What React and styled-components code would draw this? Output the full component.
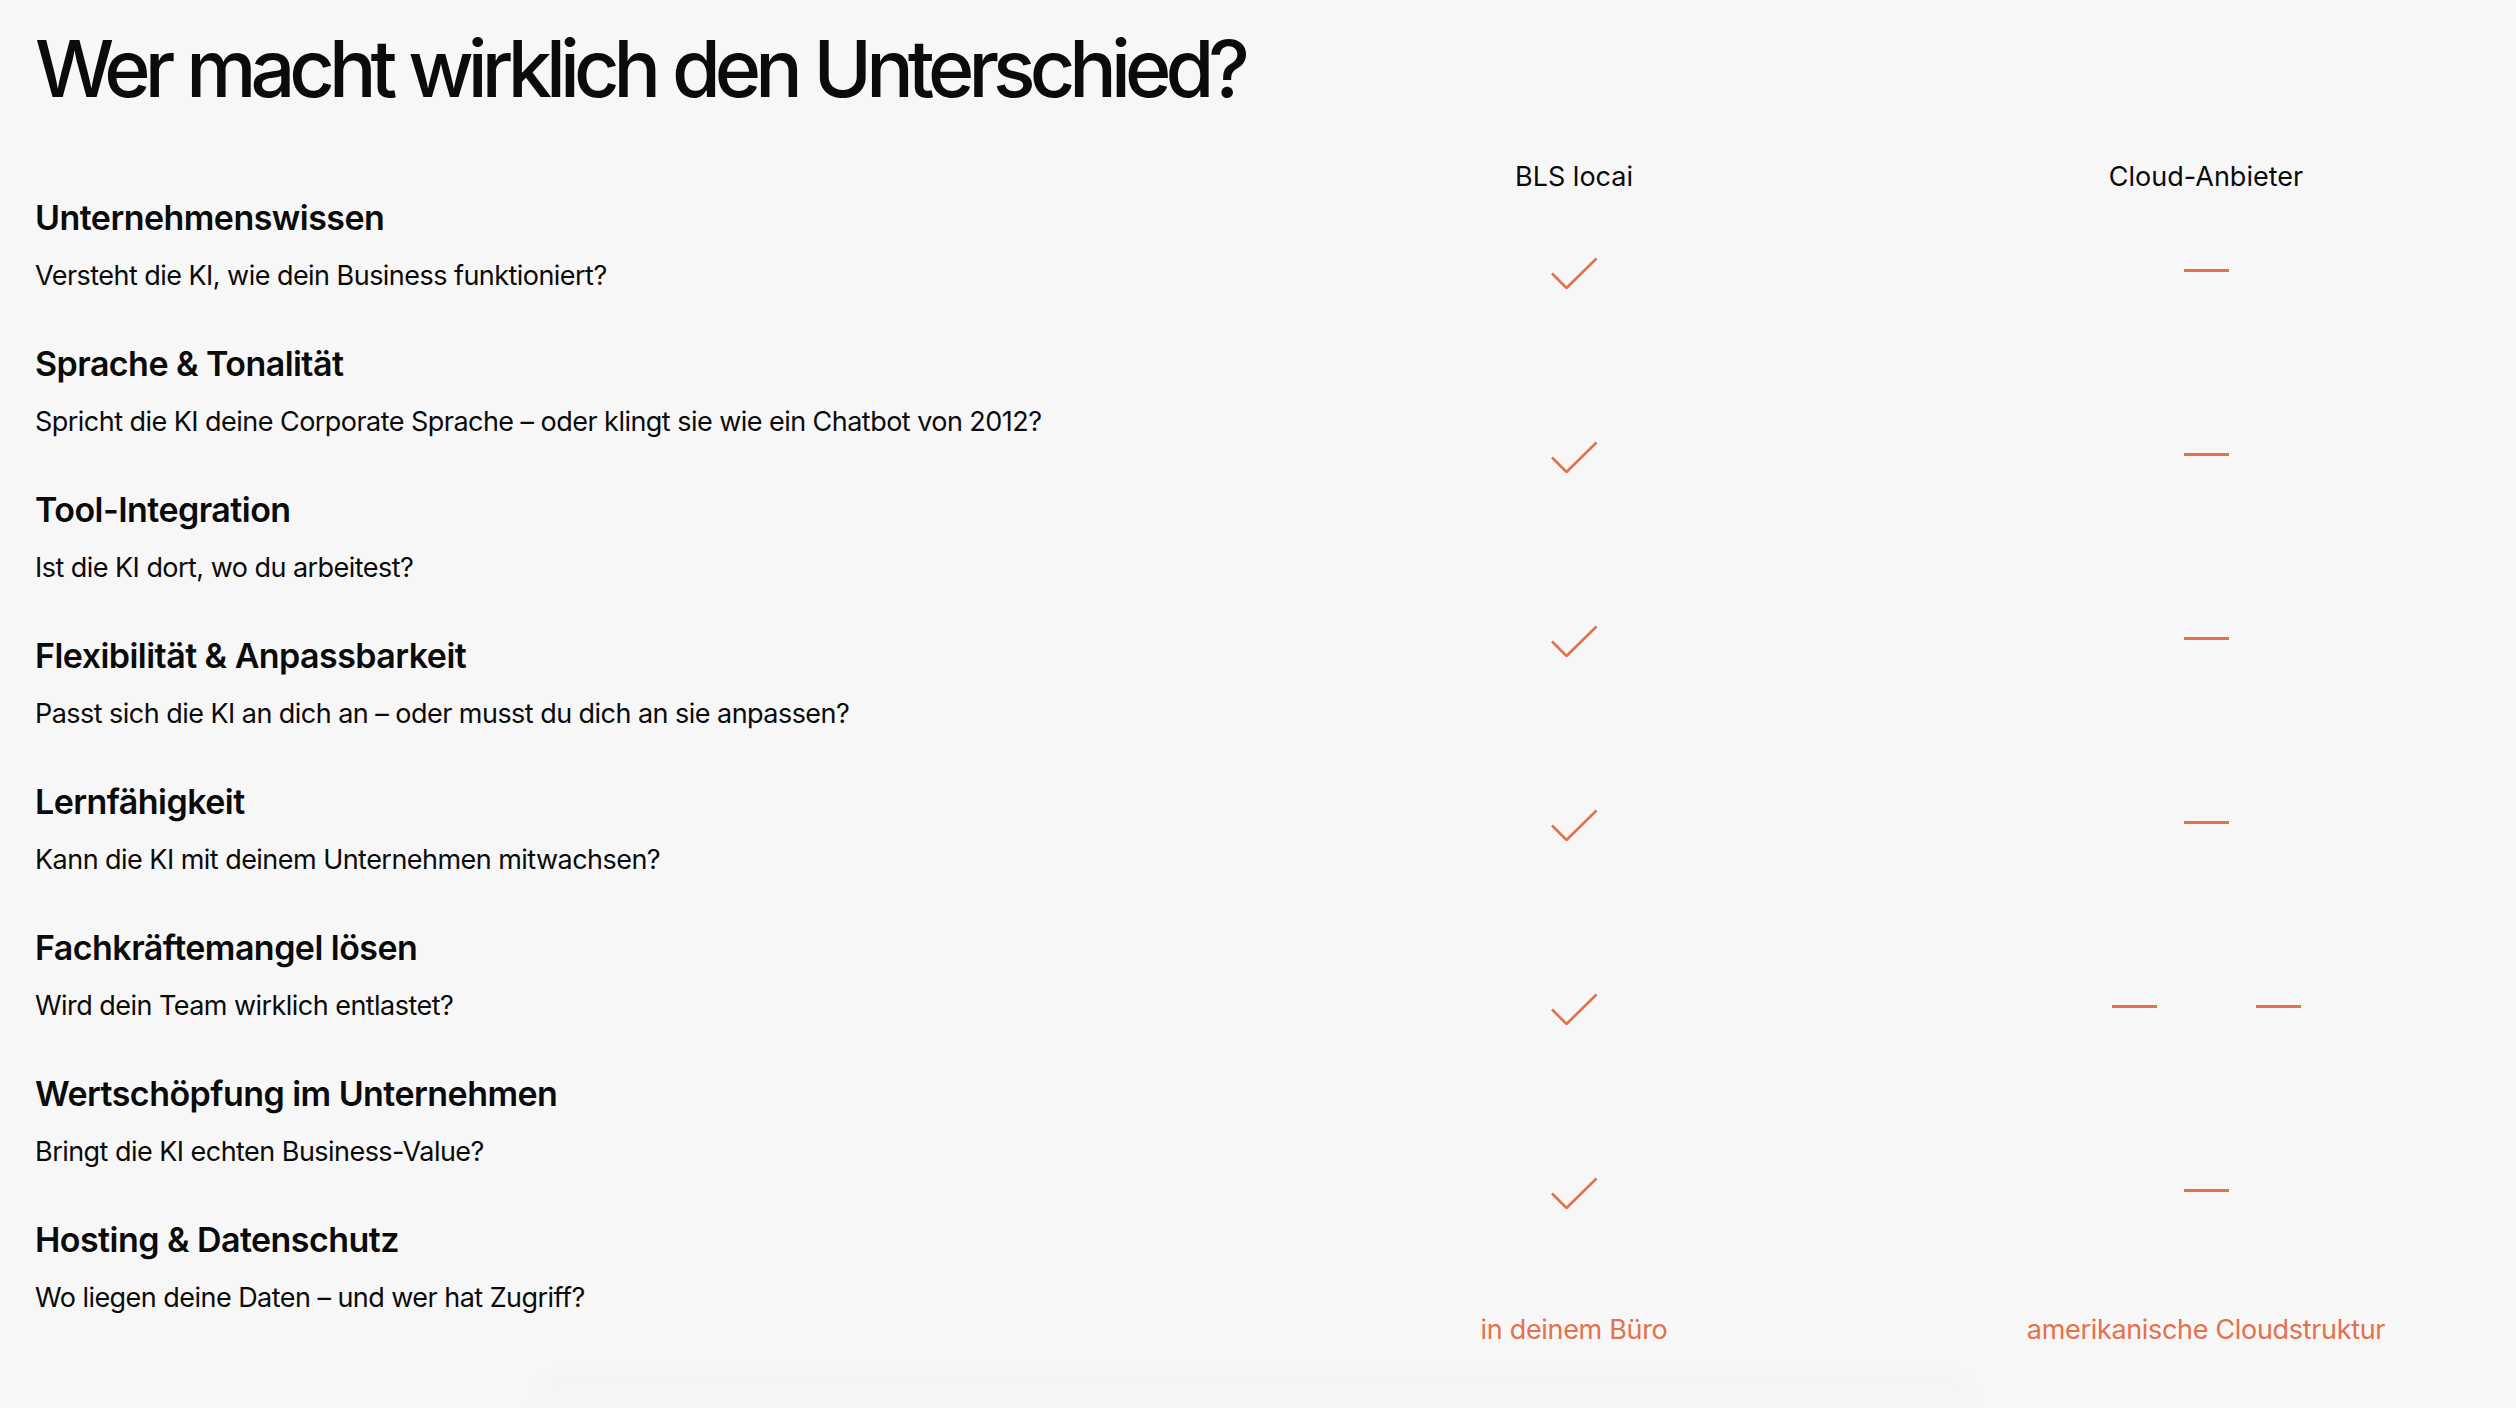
import React from "react";
import styled, { createGlobalStyle } from "styled-components";

const GlobalStyle = createGlobalStyle`
  html, body {
    margin: 0;
    padding: 0;
    background: #f7f7f7;
  }
  body {
    font-family: Inter, "Noto Sans", sans-serif;
    color: #0b0b0b;
    -webkit-font-smoothing: antialiased;
  }
`;

const ACCENT = "#e5704a";

const criteria = [
  { title: "Unternehmenswissen", question: "Versteht die KI, wie dein Business funktioniert?" },
  { title: "Sprache & Tonalität", question: "Spricht die KI deine Corporate Sprache – oder klingt sie wie ein Chatbot von 2012?" },
  { title: "Tool-Integration", question: "Ist die KI dort, wo du arbeitest?" },
  { title: "Flexibilität & Anpassbarkeit", question: "Passt sich die KI an dich an – oder musst du dich an sie anpassen?" },
  { title: "Lernfähigkeit", question: "Kann die KI mit deinem Unternehmen mitwachsen?" },
  { title: "Fachkräftemangel lösen", question: "Wird dein Team wirklich entlastet?" },
  { title: "Wertschöpfung im Unternehmen", question: "Bringt die KI echten Business-Value?" },
  { title: "Hosting & Datenschutz", question: "Wo liegen deine Daten – und wer hat Zugriff?" },
];

const providers = [
  { name: "BLS locai", marks: ["check", "check", "check", "check", "check", "check"], note: "in deinem Büro" },
  { name: "Cloud-Anbieter", marks: ["dash", "dash", "dash", "dash", "double", "dash"], note: "amerikanische Cloudstruktur" },
];

const Check = () => (
  <svg width="48" height="32" viewBox="0 0 48 32" fill="none">
    <path d="M2 16.5 L16.5 31 L46.5 1.5" stroke={ACCENT} strokeWidth="2.6" />
  </svg>
);

const Mark = ({ type }) => {
  if (type === "check") return <Check />;
  if (type === "double") {
    return (
      <DashPair>
        <Dash />
        <Dash />
      </DashPair>
    );
  }
  return <Dash />;
};

export default function App() {
  return (
    <Page>
      <GlobalStyle />
      <Title>Wer macht wirklich den Unterschied?</Title>
      <Comparison>
        <CriteriaList>
          {criteria.map((c) => (
            <Criterion key={c.title}>
              <CriterionTitle>{c.title}</CriterionTitle>
              <Question>{c.question}</Question>
            </Criterion>
          ))}
        </CriteriaList>
        {providers.map((p) => (
          <ProviderColumn key={p.name}>
            <ProviderName>{p.name}</ProviderName>
            <MarkList>
              {p.marks.map((m, i) => (
                <MarkCell key={i}>
                  <Mark type={m} />
                </MarkCell>
              ))}
            </MarkList>
            <Note>{p.note}</Note>
          </ProviderColumn>
        ))}
      </Comparison>
      <NextCard />
    </Page>
  );
}

const Page = styled.div`
  min-height: 1408px;
  box-sizing: border-box;
  padding: 18px 60px 0 35px;
  overflow: hidden;
`;

const Title = styled.h1`
  margin: 0;
  font-size: 79px;
  line-height: 100px;
  font-weight: 500;
  letter-spacing: -0.075em;
  word-spacing: 0.02em;
`;

const Comparison = styled.div`
  display: flex;
  align-items: flex-start;
`;

const CriteriaList = styled.div`
  flex: 1;
  display: flex;
  flex-direction: column;
  gap: 50px;
  padding-top: 80px;
`;

const Criterion = styled.div`
  display: flex;
  flex-direction: column;
  gap: 20px;
`;

const CriterionTitle = styled.div`
  font-size: 34px;
  line-height: 40px;
  font-weight: 600;
  letter-spacing: -0.016em;
`;

const Question = styled.div`
  font-size: 27px;
  line-height: 36px;
  font-weight: 400;
  letter-spacing: -0.02em;
`;

const ProviderColumn = styled.div`
  width: 500px;
  margin-left: 132px;
  display: flex;
  flex-direction: column;
  align-items: center;
  padding-top: 39px;
`;

const ProviderName = styled.div`
  font-size: 27px;
  line-height: 40px;
  font-weight: 400;
  letter-spacing: 0;
`;

const MarkList = styled.div`
  margin-top: 60px;
  display: flex;
  flex-direction: column;
  gap: 152px;
`;

const MarkCell = styled.div`
  height: 32px;
  display: flex;
  align-items: flex-start;
  justify-content: center;
`;

const Dash = styled.div`
  width: 45px;
  height: 3px;
  margin-top: 12px;
  background: ${ACCENT};
`;

const DashPair = styled.div`
  display: flex;
  gap: 99px;
`;

const Note = styled.div`
  margin-top: 106px;
  font-size: 27px;
  line-height: 30px;
  color: ${ACCENT};
  letter-spacing: -0.012em;
`;

const NextCard = styled.div`
  margin: 38px auto 0 505px;
  width: 1430px;
  height: 80px;
  border-radius: 24px;
  background: #f5f5f5;
  box-shadow: 0 -6px 30px rgba(0, 0, 0, 0.025);
`;
